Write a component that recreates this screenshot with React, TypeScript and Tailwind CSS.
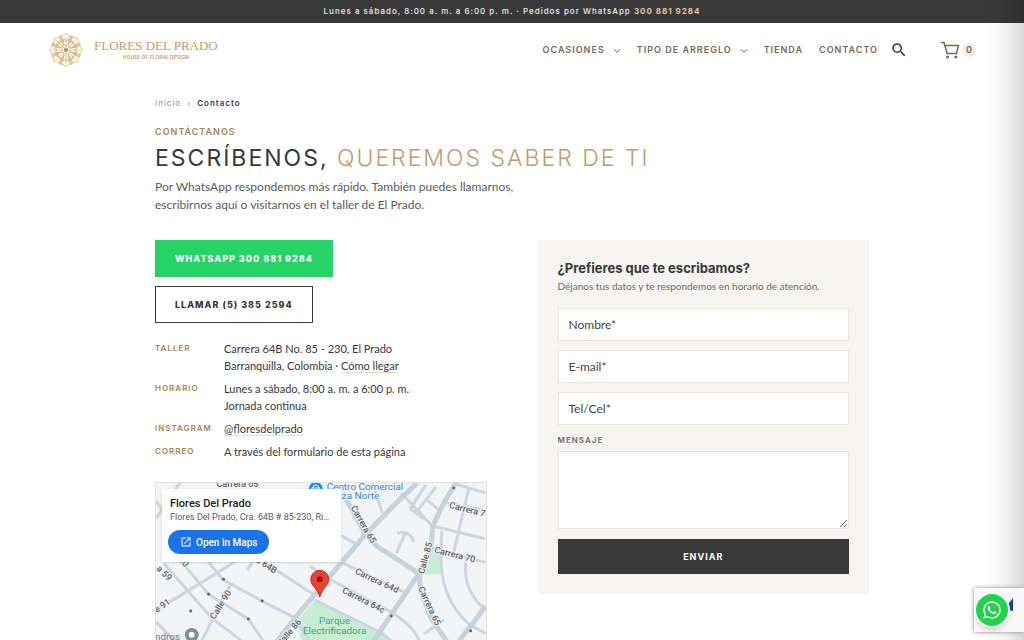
import React from 'react';
import { FaWhatsapp } from 'react-icons/fa';
import { MdOpenInNew, MdSearch } from 'react-icons/md';

interface NavItem {
  label: string;
  hasMenu?: boolean;
}

const navItems: NavItem[] = [
  { label: 'Ocasiones', hasMenu: true },
  { label: 'Tipo de arreglo', hasMenu: true },
  { label: 'Tienda' },
  { label: 'Contacto' },
];

const fields = [
  { id: 'nombre', label: 'Nombre*', type: 'text' },
  { id: 'email', label: 'E-mail*', type: 'email' },
  { id: 'telefono', label: 'Tel/Cel*', type: 'tel' },
];

const streets = [
  'M8 81 L35 112 L57 137 L85 158 L100 175',
  'M22 75 L53 112 L93 137 L112 165',
  'M50 76 L67 97 L107 119 L140 136 L165 175',
  'M0 127 L22 115 L80 79 L110 60',
  'M38 175 L75 102',
  'M103 76 L160 113',
  'M92 88 L105 66',
  'M0 36 L24 0',
  'M0 18 L8 30',
  'M0 140 L20 160 L30 175',
  'M247 10 L278 43 L331 56',
  'M302 1 L332 10',
  'M315 6 L300 70',
  'M293 20 L332 28',
  'M288 48 C286 80 286 105 302 127 S322 144 332 152',
  'M277 66 L332 80',
  'M312 80 C310 104 320 118 332 128',
  'M187 80 L252 111',
  'M155 84 L177 98 L237 130 C252 140 262 148 268 165',
  'M160 118 L227 151 L250 170',
  'M187 53 L202 62',
  'M270 152 L290 138',
  'M256 26 L272 2',
  'M262 30 L282 4',
  'M256 26 L270 36',
  'M272 16 L286 28',
  'M218 0 L228 30',
  'M242 71 L251 51',
  'M243 51 Q254 46 260 59',
];

const mainStreets = [
  'M263 0 L243 19 L210 53 L187 80 L162 110 L140 136 L110 175',
  'M188 10 L210 50 L223 64 L265 91',
  'M302 0 L290 20 L279 43 L277 66 L265 91 L220 158 L205 180',
  'M265 91 L267 110 L277 136 L300 170',
  'M295 172 L318 143 L332 124',
];

const streetLabels = [
  { text: 'Carrera 65', x: 61, y: 4, angle: 0 },
  { text: 'Carrera 65', x: 196, y: 25, angle: 60 },
  { text: 'Calle 85', x: 270, y: 92, angle: -75 },
  { text: 'Carrera 70', x: 280, y: 70, angle: 14 },
  { text: 'Carrera 71', x: 295, y: 25, angle: 14 },
  { text: 'Carrera 64d', x: 200, y: 91, angle: 25 },
  { text: 'Carrera 64c', x: 187, y: 110, angle: 27 },
  { text: 'Carrera 65', x: 264, y: 106, angle: 65 },
  { text: 'a 64B', x: 100, y: 79, angle: 33 },
  { text: 'Calle 90', x: 59, y: 138, angle: -58 },
  { text: 'Calle 86', x: 126, y: 165, angle: -50 },
  { text: 'a 59', x: 0, y: 87, angle: 44 },
  { text: 'e 91', x: 1, y: 131, angle: -36 },
  { text: '90', x: 22, y: 78, angle: 45 },
];

const EmblemIcon: React.FC = () => (
  <svg viewBox="-50 -50 100 100" className="size-9" aria-hidden="true">
    <defs>
      <linearGradient id="gold" x1="0" y1="0" x2="1" y2="1">
        <stop offset="0" stopColor="#efd6ae" />
        <stop offset="1" stopColor="#c9a774" />
      </linearGradient>
      <g id="petal" fill="none" stroke="#cfb085" strokeWidth="2">
        <path d="M0 -8 C-8 -18 -9 -24 -4 -30 C-11 -28 -14 -35 -9 -40 C-6 -42 -2 -41 0 -47 C2 -41 6 -42 9 -40 C14 -35 11 -28 4 -30 C9 -24 8 -18 0 -8Z" fill="#fffaf2" />
        <path d="M0 -12 V-38 M0 -24 L-5 -30 M0 -24 L5 -30" />
      </g>
    </defs>
    {[22, 67, 112, 157, 202, 247, 292, 337].map((angle) => (
      <ellipse key={angle} cx="0" cy="-30" rx="11" ry="14" fill="url(#gold)" transform={`rotate(${angle})`} />
    ))}
    {[0, 45, 90, 135, 180, 225, 270, 315].map((angle) => (
      <use key={angle} href="#petal" transform={`rotate(${angle})`} />
    ))}
    <circle r="6" fill="#b39a58" />
  </svg>
);

const ChevronIcon: React.FC = () => (
  <svg viewBox="0 0 8 6" className="mt-0.5 h-1.5 w-2" fill="none" stroke="currentColor" strokeWidth="1" aria-hidden="true">
    <path d="M1 1.2 L4 4.4 L7 1.2" />
  </svg>
);

const CartIcon: React.FC = () => (
  <svg viewBox="0 0 20 20" className="size-5" fill="none" stroke="currentColor" strokeWidth="1.5" aria-hidden="true">
    <path d="M1 2.5 H4 L7.2 13.5 H16.5 L18.5 5.5 H5" />
    <circle cx="7.5" cy="17" r="1.5" fill="currentColor" stroke="none" />
    <circle cx="15.8" cy="17" r="1.5" fill="currentColor" stroke="none" />
  </svg>
);

const Header: React.FC = () => (
  <header>
    <p className="bg-[#393939] text-center text-[8px] leading-[23px] font-medium tracking-[1px] text-[#eeeeee]">
      Lunes a sábado, 8:00 a. m. a 6:00 p. m. · Pedidos por WhatsApp{' '}
      <a href="#whatsapp" className="font-bold text-[#e0c999]">300 881 9284</a>
    </p>
    <div className="flex h-[54px] items-center justify-between px-12">
      <a href="#inicio" className="flex items-center gap-2.5">
        <EmblemIcon />
        <span className="flex flex-col items-center text-[#bf9e6c]">
          <span className="font-['Liberation_Serif',serif] text-[13px] leading-[14px]">FLORES DEL PRADO</span>
          <span className="text-[5px] leading-[8px] font-semibold">HOUSE OF FLORAL DESIGN</span>
        </span>
      </a>
      <nav className="flex items-center gap-4 text-[9px] font-semibold tracking-[1px] text-[#7b6755] uppercase">
        {navItems.map((item) => (
          <a key={item.label} href="#menu" className="flex items-center gap-2">
            {item.label}
            {item.hasMenu && <ChevronIcon />}
          </a>
        ))}
        <button type="button" aria-label="Buscar" className="-ml-1 text-[#393939]">
          <MdSearch className="size-[18px]" />
        </button>
        <a href="#carrito" aria-label="Carrito" className="ml-4 flex items-center gap-0.5">
          <CartIcon />
          <span className="flex size-3.5 items-center justify-center rounded-full bg-[#f1ece7] tracking-normal">0</span>
        </a>
      </nav>
    </div>
  </header>
);

const InfoRow: React.FC<{ title: string; children: React.ReactNode }> = ({ title, children }) => (
  <div className="flex">
    <dt className="w-[69px] shrink-0 text-[8px] leading-[17px] font-semibold tracking-[1px] text-[#a98550] uppercase">{title}</dt>
    <dd className="font-[Lato,sans-serif] text-[11px] leading-[17px]">{children}</dd>
  </div>
);

const StreetMap: React.FC = () => (
  <div className="relative h-[240px] overflow-hidden border border-[#e6e2dc] bg-[#f3f4f5] font-[Roboto,sans-serif]">
    <svg viewBox="0 0 332 240" className="h-full w-full" preserveAspectRatio="xMinYMin slice" role="img" aria-label="Mapa del taller">
      <g fill="#c5efd3">
        <path d="M160 118 L142 139 L150 175 H250 L227 151Z" />
        <path d="M278 66 L288 71 V92 H267Z" />
      </g>
      <g fill="none" stroke="#ccd5de" strokeWidth="3">
        {streets.map((d) => <path key={d} d={d} />)}
      </g>
      <g fill="none" stroke="#c7d1db" strokeWidth="5" strokeLinejoin="round">
        {mainStreets.map((d) => <path key={d} d={d} />)}
      </g>
      <g fill="#5b6570">
        <circle cx="35" cy="129" r="1.5" />
        <circle cx="53" cy="112" r="1.5" />
        <circle cx="107" cy="119" r="1.5" />
        <circle cx="93" cy="137" r="1.5" />
        <circle cx="68" cy="97" r="1.5" />
        <circle cx="237" cy="134" r="1.5" />
        <circle cx="317" cy="149" r="1.5" />
        <circle cx="300" cy="5" r="1.5" />
      </g>
      <g fill="#5a6168" fontSize="9" fontWeight="500" stroke="#f3f4f5" strokeWidth="2" paintOrder="stroke">
        {streetLabels.map((label) => (
          <text key={`${label.text}-${label.x}`} transform={`translate(${label.x} ${label.y}) rotate(${label.angle})`}>
            {label.text}
          </text>
        ))}
      </g>
      <circle cx="161" cy="6" r="7" fill="#1688ef" />
      <path d="M158 5 a3 3 0 0 1 6 0 M157 5 h8 v5 h-8z" fill="none" stroke="#fff" />
      <g fill="#3d82d8" fontSize="10" stroke="#f3f4f5" strokeWidth="2" paintOrder="stroke">
        <text x="172" y="7">Centro Comercial</text>
        <text x="173" y="16">Plaza Norte</text>
      </g>
      <g fill="#4e9b79" fontSize="10" textAnchor="middle">
        <text x="180" y="142">Parque</text>
        <text x="180" y="152">Electrificadora</text>
      </g>
      <text x="-1" y="158" fill="#6b747d" fontSize="10">ndros</text>
      <circle cx="36" cy="153" r="5" fill="#fff" stroke="#78909c" strokeWidth="4" />
      <path d="M165 115 C163 106 156 104 156 97 a9 9 0 0 1 18 0 C174 104 167 106 165 115Z" fill="#ea4335" stroke="#c5221f" />
      <circle cx="165" cy="97" r="3" fill="#9c1410" />
    </svg>
    <div className="absolute top-1.5 left-1.5 flex w-[179px] flex-col items-start bg-white px-2 pt-2 pb-2 shadow-sm">
      <p className="text-[11px] leading-[14px] font-medium text-[#202124]">Flores Del Prado</p>
      <p className="w-full truncate text-[9px] leading-[13px] text-[#5b5b5b]">Flores Del Prado, Cra. 64B # 85-230, Riomar, Barranquilla</p>
      <a href="#mapa" className="mt-1.5 -ml-0.5 flex h-6 items-center gap-1 rounded-full bg-[#1a73e8] px-3 text-[10px] font-medium text-white">
        <MdOpenInNew className="size-3" />
        Open in Maps
      </a>
    </div>
  </div>
);

const ContactForm: React.FC = () => (
  <form className="flex flex-col self-start bg-[#f7f5f1] p-5">
    <h2 className="text-[13px] leading-4 font-bold">¿Prefieres que te escribamos?</h2>
    <p className="mb-3 font-[Lato,sans-serif] text-[10px] leading-5 text-[#6b6b6b]">
      Déjanos tus datos y te respondemos en horario de atención.
    </p>
    <div className="flex flex-col gap-[9px]">
      {fields.map((field) => (
        <input
          key={field.id}
          id={field.id}
          type={field.type}
          placeholder={field.label}
          aria-label={field.label}
          className="h-[33px] w-full border border-[#ebe6df] bg-white px-2.5 font-[Lato,sans-serif] text-[12px] placeholder:text-[#444444]"
        />
      ))}
    </div>
    <label htmlFor="mensaje" className="mt-[9px] mb-1 text-[8px] leading-[13px] font-semibold tracking-[1px] text-[#6b6b6b] uppercase">
      Mensaje
    </label>
    <textarea id="mensaje" className="h-[78px] w-full resize-y border border-[#ebe6df] bg-white p-2.5 text-[12px]" />
    <button type="submit" className="mt-2.5 h-[35px] bg-[#393939] text-[9px] font-bold tracking-[1px] text-white uppercase">
      Enviar
    </button>
  </form>
);

const App: React.FC = () => {
  return (
    <div className="min-h-screen bg-white font-[Inter,sans-serif] text-[#393939]">
      <Header />
      <main className="mx-auto w-full max-w-[714px] pt-5 pb-10">
        <nav aria-label="Ruta" className="flex gap-1.5 text-[8px] leading-3 tracking-[1px]">
          <a href="#inicio" className="text-[#8d8d8d]">Inicio</a>
          <span className="text-[#a98550]">›</span>
          <span className="font-semibold">Contacto</span>
        </nav>

        <p className="mt-[17px] text-[9px] leading-3 font-semibold tracking-[1px] text-[#a98550] uppercase">Contáctanos</p>
        <h1 className="mt-[5px] text-[23px] leading-[30px] tracking-[2px] uppercase">
          Escríbenos, <span className="font-light text-[#bf9e6c]">queremos saber de ti</span>
        </h1>
        <p className="mt-[5px] max-w-[370px] font-[Lato,sans-serif] text-[12px] leading-[18px] text-[#5c5c5c]">
          Por WhatsApp respondemos más rápido. También puedes llamarnos, escribirnos aquí o visitarnos en el taller de El Prado.
        </p>

        <div className="mt-[26px] grid grid-cols-2 gap-[51px]">
          <section>
            <div className="flex flex-col items-start gap-[9px] text-[9px] font-extrabold tracking-[1px] uppercase">
              <a href="#whatsapp" className="flex h-[37px] items-center bg-[#25d366] px-5 text-white">WhatsApp 300 881 9284</a>
              <a href="#llamar" className="flex h-[37px] items-center border border-[#393939] px-[19px]">Llamar (5) 385 2594</a>
            </div>
            <dl className="mt-[17px] mb-[22px] flex flex-col gap-1.5">
              <InfoRow title="Taller">
                Carrera 64B No. 85 - 230, El Prado
                <br />
                Barranquilla, Colombia · <a href="#mapa" className="border-b border-[#e6ddcf]">Cómo llegar</a>
              </InfoRow>
              <InfoRow title="Horario">
                Lunes a sábado, 8:00 a. m. a 6:00 p. m.
                <br />
                Jornada continua
              </InfoRow>
              <InfoRow title="Instagram">
                <a href="#instagram" className="border-b border-[#e6ddcf]">@floresdelprado</a>
              </InfoRow>
              <InfoRow title="Correo">A través del formulario de esta página</InfoRow>
            </dl>
            <StreetMap />
          </section>
          <ContactForm />
        </div>
      </main>

      {/* Shadow of the closed cart drawer */}
      <div className="pointer-events-none fixed inset-y-0 right-0 w-10 bg-linear-to-l from-black/15 via-black/4 to-transparent" />

      {/* Badge and chat button */}
      <div className="fixed right-0 bottom-2 flex h-11 w-[50px] items-center bg-[#f8f8f8] shadow-[0_0_4px_#888888]">
        <svg viewBox="0 0 50 44" className="absolute inset-0 h-full w-full" aria-hidden="true">
          <path d="M30 11 L35 15 L39 10 V23 L32 22Z" fill="#1c3aa9" />
        </svg>
        <a href="#whatsapp" aria-label="WhatsApp" className="relative flex size-9 items-center justify-center rounded-full border-2 border-white bg-[#20d34a] text-white shadow-md">
          <FaWhatsapp className="size-5" />
        </a>
      </div>
    </div>
  );
};

export default App;
